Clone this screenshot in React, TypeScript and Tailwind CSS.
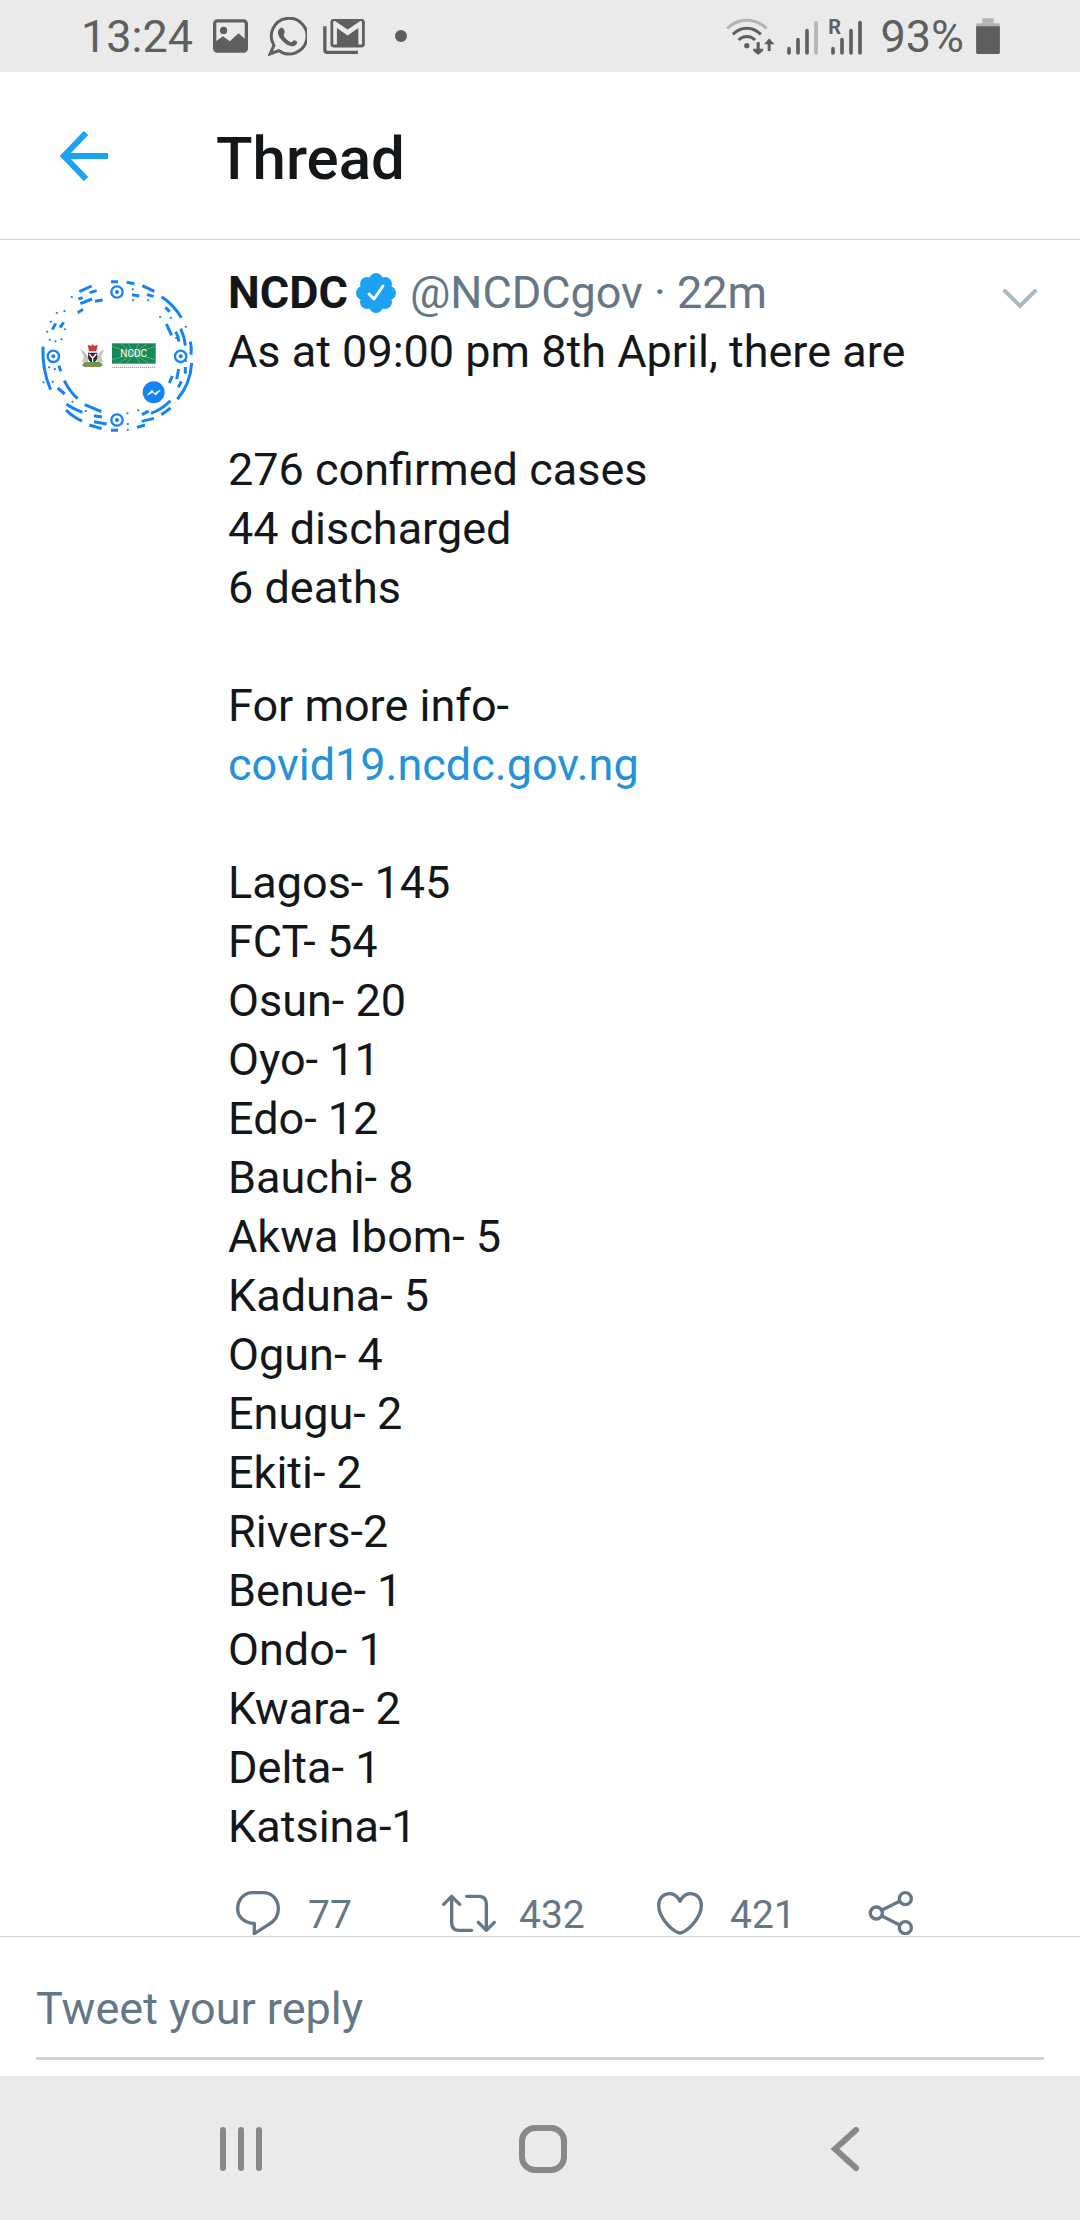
import type { ReactNode } from "react";

const states = [
  "Lagos- 145",
  "FCT- 54",
  "Osun- 20",
  "Oyo- 11",
  "Edo- 12",
  "Bauchi- 8",
  "Akwa Ibom- 5",
  "Kaduna- 5",
  "Ogun- 4",
  "Enugu- 2",
  "Ekiti- 2",
  "Rivers-2",
  "Benue- 1",
  "Ondo- 1",
  "Kwara- 2",
  "Delta- 1",
  "Katsina-1",
];

function StatusBar() {
  return (
    <div className="flex h-[72px] items-center justify-between bg-[#eaeaea] pr-20 pl-[81px] text-[45px] leading-[59px] text-[#5f5f5f]">
      <div className="flex items-center">
        <span>13:24</span>
        <svg viewBox="461 54 106 102" className="ml-5 h-[34px] w-[35px]">
          <rect x="466" y="59" width="96" height="92" rx="8" fill="none" stroke="#5f5f5f" strokeWidth="10" />
          <circle cx="493" cy="88" r="11" fill="#5f5f5f" />
          <path d="M466 124 L491 106 L512 121 L538 97 L562 117 V151 H466Z" fill="#5f5f5f" />
        </svg>
        <svg viewBox="626 47 118 118" className="ml-5 size-[39px]">
          <path d="M644 133 A54 54 0 1 1 659 149 L632 159Z" fill="none" stroke="#5f5f5f" strokeWidth="9" />
          <path
            d="M663 81 C671 77 674 82 676 90 C678 97 671 100 675 106 C680 114 686 119 694 123 C700 126 701 115 708 118 C714 120 716 123 713 128 C708 138 695 137 683 130 C668 121 656 106 656 94 C656 88 659 83 663 81Z"
            fill="#5f5f5f"
          />
        </svg>
        <svg viewBox="792 53 126 106" className="ml-4 h-[35px] w-[42px]">
          <path d="M797 75 V147 Q797 154 804 154 H897" fill="none" stroke="#5f5f5f" strokeWidth="10" />
          <rect x="814" y="53" width="104" height="86" rx="10" fill="#5f5f5f" />
          <path d="M828 130 V70 L866 96 L904 70 V130" fill="none" stroke="#eaeaea" strokeWidth="11" />
          <path d="M824 62 L866 90 L908 62" fill="none" stroke="#eaeaea" strokeWidth="8" />
        </svg>
        <span className="ml-[30px] size-3 rounded-full bg-[#5f5f5f]" />
      </div>
      <div className="flex items-center">
        <svg viewBox="80 48 146 111" className="h-[37px] w-[49px]" fill="none" stroke="#5f5f5f" strokeWidth="9">
          <path d="M83 79 C118 47 166 47 201 79" stroke="#b4b4b4" />
          <path d="M100 97 C125 73 159 73 184 97" />
          <path d="M117 114 C132 100 152 100 167 114" />
          <circle cx="142" cy="131" r="8" fill="#5f5f5f" stroke="none" />
          <path d="M176 120 V150" />
          <path d="M161 140 L176 155 L191 140 V146 L176 159 L161 146Z M161 140 H191 L176 158Z M194 127 L209 109 L225 127Z" fill="#5f5f5f" stroke="none" />
          <path d="M209 118 V147" />
        </svg>
        <svg viewBox="262 48 93 111" className="ml-3 h-[37px] w-[31px]" stroke="#5f5f5f" strokeWidth="11" strokeLinecap="round">
          <path d="M268 140 V153 M295 113 V153 M322 86 V153" />
          <path d="M349 62 V153" stroke="#b4b4b4" />
        </svg>
        <svg viewBox="388 48 99 111" className="ml-[11px] h-[37px] w-[33px] overflow-visible" stroke="#5f5f5f" strokeWidth="11" strokeLinecap="round">
          <path d="M400 140 V153 M427 113 V153 M454 86 V153 M481 62 V153" />
          <text x="386" y="95" className="font-bold" fontSize="60" stroke="none" fill="#5f5f5f">
            R
          </text>
        </svg>
        <span className="ml-[18px]">93%</span>
        <svg viewBox="828 50 72 109" className="ml-3 h-9 w-6">
          <path d="M847 51 H881 V66 H896 Q900 66 900 70 V78 H828 V70 Q828 66 832 66 H847Z" fill="#b4b4b4" />
          <path d="M828 75 H900 V154 Q900 159 895 159 H833 Q828 159 828 154Z" fill="#5f5f5f" />
        </svg>
      </div>
    </div>
  );
}

function Header() {
  return (
    <header className="flex h-[168px] items-center border-b border-[#ccd6dd] pl-[60px]">
      <button type="button" aria-label="Back">
        <svg viewBox="0 0 48 50" className="h-[50px] w-12" fill="none" stroke="#1da1f2" strokeWidth="6">
          <path d="M26 2 L4 25 L26 48 M4 25 H48" />
        </svg>
      </button>
      <h1 className="ml-[108px] pt-1.5 text-[60px] leading-[70px] font-medium">Thread</h1>
    </header>
  );
}

function Avatar() {
  return (
    <svg viewBox="60 54 462 462" className="mt-[15px] size-[154px] shrink-0" fill="none" stroke="#1484f5" strokeWidth="9">
      <g strokeWidth="7">
        <circle cx="291" cy="96" r="17" />
        <circle cx="100" cy="289" r="17" />
        <circle cx="482" cy="289" r="17" />
        <circle cx="291" cy="480" r="17" />
      </g>
      <g fill="#1484f5" stroke="none">
        <circle cx="291" cy="96" r="6" />
        <circle cx="100" cy="289" r="6" />
        <circle cx="482" cy="289" r="6" />
        <circle cx="291" cy="480" r="6" />
      </g>
      <path d="M69 260 Q66 330 92 389 M133 362 Q148 394 173 416 M117 317 L122 334 M113 384 L134 402" />
      <path d="M178 95 L215 78 M209 98 L230 92 M175 117 L188 113 M181 131 L216 117 M225 124 L248 120 M173 158 L189 148 M273 65 H294 M320 67 L343 71" />
      <path d="M336 104 L358 108 M367 77 L403 94 M381 104 L401 109 M425 110 Q462 135 484 173 M436 142 L449 155 M439 192 L455 226" />
      <path d="M482 206 Q494 232 496 257 M467 215 Q476 230 477 245 M511 245 Q516 265 513 284 M515 309 Q512 370 472 418 M496 321 V341 M476 327 L470 357 M484 364 L475 382 M448 369 L457 348" />
      <path d="M139 433 Q160 447 187 457 M138 450 Q160 472 186 483 M194 434 L244 455 M222 467 L246 471 M208 495 L245 506 M222 485 L260 492 M273 511 H294" />
      <path d="M366 464 L386 453 M365 484 L402 475 M351 502 L375 495 M393 460 Q426 448 451 422 M424 464 L452 444" />
      <path d="M97 209 L107 190 M120 203 L131 187" />
      <path
        d="M155 111h1 M133 153h1 M110 159h1 M92 185h1 M81 215h1 M134 208h1 M89 239h1 M106 244h1 M124 238h1 M338 88h1 M339 121h1 M384 121h1 M420 171h1 M452 173h1 M497 200h1 M87 322h1 M104 327h1 M98 365h1 M70 367h1 M157 425h1 M197 453h1 M322 460h1 M354 451h1 M323 492h1 M323 509h1 M468 234h1 M497 303h1"
        strokeWidth="6"
        strokeLinecap="round"
      />
      {/* coat of arms */}
      <g stroke="none">
        <path d="M181 267 L194 276 L204 290 L204 307 H185 L192 291Z M253 267 L240 276 L231 290 V307 H250 L243 291Z" fill="#c9c5bd" />
        <path d="M203 254 L213 258 L218 253 L223 258 L233 254 L229 274 H207Z" fill="#ca3b3e" />
        <path d="M204 278 H232 V290 Q232 304 218 309 Q204 304 204 290Z" fill="#282c2d" />
        <path d="M207 282 L218 294 L229 282 M218 293 V307" fill="none" stroke="#fff" strokeWidth="4" />
        <path d="M187 318 Q188 305 202 306 H234 Q248 306 247 318 L238 321 H196Z" fill="#5a9c50" />
        <path d="M197 313 L213 319 H226 L241 312" fill="none" stroke="#ba7654" strokeWidth="4" />
      </g>
      {/* agency logo */}
      <rect x="276" y="250" width="131" height="61" fill="#128a51" stroke="none" />
      <path
        d="M341 281 L276 259 M341 281 L276 299 M341 281 L294 311 M341 281 L300 250 M341 281 L325 250 M341 281 L357 250 M341 281 L382 250 M341 281 L407 259 M341 281 L407 299 M341 281 L388 311 M341 281 L320 311 M341 281 L362 311"
        stroke="#79bd98"
        strokeWidth="2"
      />
      <text x="341" y="292" textAnchor="middle" fontSize="30" fill="#fff" stroke="none">
        NCDC
      </text>
      <path d="M276 322 H406" stroke="#a9aaa7" strokeWidth="4" strokeDasharray="4 2" />
      {/* messenger badge */}
      <circle cx="401" cy="397" r="33" fill="#1484f5" stroke="none" />
      <path d="M383 405 L396 391 L403 401 L420 391 L407 405 L398 396Z" fill="#fff" stroke="#fff" strokeWidth="3" />
    </svg>
  );
}

function VerifiedBadge() {
  return (
    <svg viewBox="0 0 40 40" className="ml-2 size-10" role="img" aria-label="Verified account">
      <g fill="#1da1f2">
        <circle cx="20" cy="20" r="16" />
        <circle cx="20" cy="7" r="7" />
        <circle cx="29" cy="11" r="7" />
        <circle cx="33" cy="20" r="7" />
        <circle cx="29" cy="29" r="7" />
        <circle cx="20" cy="33" r="7" />
        <circle cx="11" cy="29" r="7" />
        <circle cx="7" cy="20" r="7" />
        <circle cx="11" cy="11" r="7" />
      </g>
      <path d="M13 21 L18 26 L27 13" fill="none" stroke="#fff" strokeWidth="3" strokeLinecap="round" strokeLinejoin="round" />
    </svg>
  );
}

type ActionProps = {
  label: string;
  viewBox: string;
  count?: string;
  children: ReactNode;
};

function Action({ label, viewBox, count, children }: ActionProps) {
  return (
    <button type="button" aria-label={label} className="flex h-11 w-[211px] items-center gap-5">
      <svg
        viewBox={viewBox}
        className="h-11 w-[60px] shrink-0"
        fill="none"
        stroke="#657786"
        strokeWidth="10"
        strokeLinecap="round"
        strokeLinejoin="round"
      >
        {children}
      </svg>
      {count && <span className="pt-1">{count}</span>}
    </button>
  );
}

function Actions() {
  return (
    <div className="mt-[35px] flex text-[39px] leading-[44px] text-[#657786]">
      <Action label="Reply" viewBox="54 93 180 132" count="77">
        <path d="M128 98 H160 C185 98 205 118 205 147 C205 170 192 185 175 194 L133 221 V190 C105 190 83 172 83 147 C83 118 103 98 128 98Z" />
      </Action>
      <Action label="Retweet" viewBox="687 93 180 132" count="432">
        <path d="M701 133 L725 109 L749 133 M725 109 V188 Q725 211 748 211 H785" />
        <path d="M770 109 H806 Q829 109 829 132 V211 M805 187 L829 211 L853 187" />
      </Action>
      <Action label="Like" viewBox="270 93 180 132" count="421">
        <path d="M360 124 C352 107 340 101 329 101 C310 101 296 115 296 136 C296 170 330 208 355 218 Q360 220 365 218 C390 208 424 170 424 136 C424 115 410 101 391 101 C380 101 368 107 360 124Z" />
      </Action>
      <Action label="Share" viewBox="903 93 180 132">
        <circle cx="949" cy="159" r="18" />
        <circle cx="1036" cy="116" r="18" />
        <circle cx="1036" cy="203" r="18" />
        <path d="M966 150 L1019 124 M966 168 L1019 195" />
      </Action>
    </div>
  );
}

function Tweet() {
  return (
    <article className="flex gap-[34px] border-b border-[#ccd6dd] pt-[23px] pb-px pl-10 text-[45px] leading-[59px]">
      <Avatar />
      <div className="min-w-0 flex-1">
        <div className="flex items-center pr-[43px]">
          <span className="font-bold">NCDC</span>
          <VerifiedBadge />
          <span className="ml-[14px] text-[#657786]">@NCDCgov · 22m</span>
          <button type="button" aria-label="More" className="mt-3 ml-auto">
            <svg viewBox="0 0 34 20" className="h-5 w-[34px]" fill="none" stroke="#aab8c2" strokeWidth="4" strokeLinecap="round">
              <path d="M2 2 L17 17 L32 2" />
            </svg>
          </button>
        </div>
        <div className="flex flex-col gap-[59px]">
          <p>As at 09:00 pm 8th April, there are</p>
          <p>
            276 confirmed cases
            <br />
            44 discharged
            <br />6 deaths
          </p>
          <p>
            For more info-
            <br />
            <a href="#" className="text-[#2491db]">
              covid19.ncdc.gov.ng
            </a>
          </p>
          <ul>
            {states.map((state) => (
              <li key={state}>{state}</li>
            ))}
          </ul>
        </div>
        <Actions />
      </div>
    </article>
  );
}

function ReplyBox() {
  return (
    <form className="px-9 pt-[42px] pb-4">
      <input
        type="text"
        aria-label="Tweet your reply"
        placeholder="Tweet your reply"
        className="block h-[81px] w-full border-b-3 border-[#ccd6dd] pb-[19px] text-[45px] leading-[59px] outline-none placeholder:text-[#657786]"
      />
    </form>
  );
}

function NavBar() {
  return (
    <nav className="flex h-36 items-center justify-center gap-[254px] bg-[#eaeaea] pt-0.5 pl-1.5">
      <button type="button" aria-label="Recent apps">
        <svg viewBox="0 0 48 48" className="size-12" stroke="#888" strokeWidth="6" strokeLinecap="round">
          <path d="M6 5 V43 M24 5 V43 M42 5 V43" />
        </svg>
      </button>
      <button type="button" aria-label="Home">
        <svg viewBox="0 0 48 48" className="size-12" fill="none" stroke="#888" strokeWidth="6">
          <rect x="3" y="3" width="42" height="42" rx="13" />
        </svg>
      </button>
      <button type="button" aria-label="Back">
        <svg viewBox="0 0 48 48" className="size-12" fill="none" stroke="#888" strokeWidth="6" strokeLinecap="round">
          <path d="M35 5 L14 24 L35 43" />
        </svg>
      </button>
    </nav>
  );
}

export default function App() {
  return (
    <div className="flex min-h-screen flex-col bg-white font-[Roboto,sans-serif] text-[#14171a]">
      <StatusBar />
      <Header />
      <main className="flex-1">
        <Tweet />
        <ReplyBox />
      </main>
      <NavBar />
    </div>
  );
}
